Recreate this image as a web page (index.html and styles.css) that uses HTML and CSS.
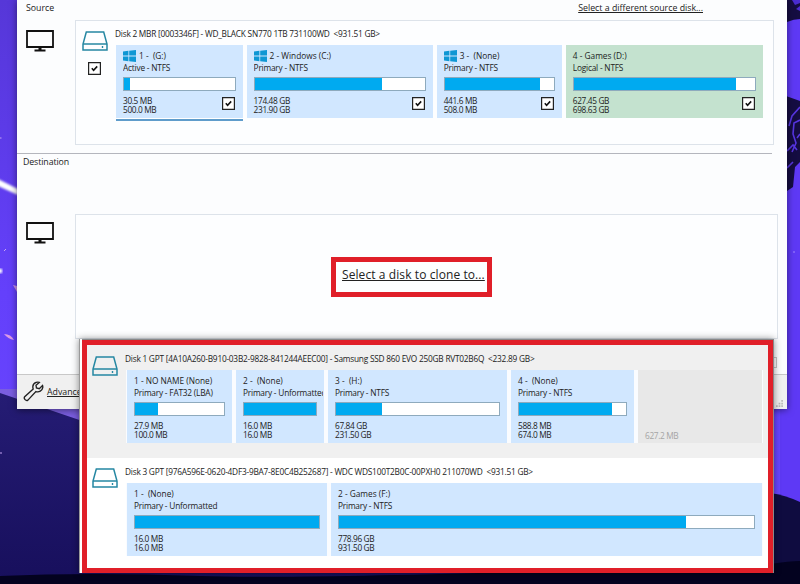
FILE: index.html
```
<!DOCTYPE html>
<html lang="en">
<head>
  <meta charset="UTF-8">
  <meta name="viewport" content="width=device-width, initial-scale=1.0">
  <title>Clone disk</title>
  <link rel="stylesheet" href="styles.css">
</head>
<body>
  <!-- shared icons -->
  <svg class="sprite" xmlns="http://www.w3.org/2000/svg">
    <symbol id="monitor" viewBox="0 0 28 22">
      <path d="M1 1h26v16H1z" fill="none" stroke="#111" stroke-width="1.800"/>
      <path d="M12.500 17h3v2.500h4v2h-11v-2h4z" fill="#111"/>
    </symbol>
    <symbol id="drive" viewBox="0 0 26 20">
      <path d="M4.300 1h17.400L25 13v6H1v-6z" fill="none" stroke="#2587a2" stroke-width="1.500"/>
      <path d="M1 13h24" fill="none" stroke="#2587a2" stroke-width="1.500"/>
      <path d="M20.500 15v2" stroke="#2587a2" stroke-width="1.400"/>
    </symbol>
    <symbol id="windows" viewBox="0 0 13 12">
      <path d="M0 1.600l5.400-.8v4.800H0zM6.200.7L13 0v5.600H6.200zM0 6.400h5.400v4.800L0 10.400zM6.200 6.400H13V12l-6.800-.8z" fill="#0f97d4"/>
    </symbol>
    <symbol id="check" viewBox="0 0 13 13">
      <path d="M.6.6h11.800v11.800H.6z" fill="#fff" stroke="#222" stroke-width="1.200"/>
      <path d="M3.800 6.200l1.800 2 3.600-3.800" fill="none" stroke="#111" stroke-width="1.600"/>
    </symbol>
  </svg>

  <svg class="wallpaper" viewBox="0 0 800 584" xmlns="http://www.w3.org/2000/svg">
    <defs>
      <linearGradient id="sky" x1="0" y1="0" x2="0" y2="1">
        <stop offset="0" stop-color="#5637d8"/>
        <stop offset=".5" stop-color="#6440fb"/>
        <stop offset="1" stop-color="#6a48ff"/>
      </linearGradient>
      <linearGradient id="ground" x1="0" y1="0" x2="0" y2="1">
        <stop offset="0" stop-color="#251c74"/>
        <stop offset="1" stop-color="#170f5c"/>
      </linearGradient>
      <filter id="soft"><feGaussianBlur stdDeviation="1"/></filter>
    </defs>
    <rect width="800" height="584" fill="url(#sky)"/>
    <rect x="780" width="20" height="584" fill="#5e39f5"/>
    <path d="M0 389h40l60 30v30H0z" fill="#7a5ee0"/>
    <path d="M0 393l100 34 500 60v97H0z" fill="url(#ground)"/>
    <path d="M770 493q15 2 30 9v82h-30z" fill="#0f0c40"/>
    <path d="M0 576q90-4 200 0t570-12q20-3 30-3v23H0z" fill="#03021f"/>
    <path d="M-2 179l20 10v6l-20-9z" fill="#fff" filter="url(#soft)"/>
    <circle cx="0" cy="271" r="2.400" fill="#fff" filter="url(#soft)"/>
    <path d="M4 334q7 0 10 6-6-1-10-6z" fill="#dd9be6"/>
    <path d="M13 285l4 7v-6z" fill="#cb93e8"/>
    <path d="M4 251l2-2M0 138h1.500M0 453h2" stroke="#c5a4f4"/>
    <path d="M786 0h14v19q-6 0-13 3z" fill="#150d42"/>
    <path d="M792 0h8v3l-5 2zM796 9l4-3v5z" fill="#4a2dd0"/>
    <path d="M786 96l14 5v61l-5 5-2 20-6 4z" fill="#150d42"/>
    <path d="M800 107l-8 9-3 10M800 120l-6 3-1 11 3 9-4 9M787 151l6-6 4 5M800 134l-3 4M787 168l6-6" fill="none" stroke="#5635e0" stroke-width="1.600"/>
    <path d="M793 252h2" stroke="#9f85ff"/>
  </svg>

  <main class="window">
    <section class="source">
      <header class="source-head">
        <span>Source</span>
        <a class="link">Select a different source disk...</a>
      </header>
      <div class="section-row">
        <svg class="monitor"><use href="#monitor"/></svg>
        <div class="panel source-panel">
          <div class="disk-side">
            <svg class="drive"><use href="#drive"/></svg>
            <svg class="check"><use href="#check"/></svg>
          </div>
          <div class="disk-main">
            <h2 class="disk-title">Disk 2 MBR [0003346F] - WD_BLACK SN770 1TB 731100WD  &lt;931.51 GB&gt;</h2>
            <div class="parts parts-source">
              <div class="part selected">
                <div class="name"><svg class="win"><use href="#windows"/></svg>1 -  (G:)</div>
                <div class="type">Active - NTFS</div>
                <div class="bar"><i style="width:5%"></i></div>
                <div class="sizes">30.5 MB<br>500.0 MB<svg class="check"><use href="#check"/></svg></div>
              </div>
              <div class="part">
                <div class="name"><svg class="win"><use href="#windows"/></svg>2 - Windows (C:)</div>
                <div class="type">Primary - NTFS</div>
                <div class="bar"><i style="width:75%"></i></div>
                <div class="sizes">174.48 GB<br>231.90 GB<svg class="check"><use href="#check"/></svg></div>
              </div>
              <div class="part">
                <div class="name"><svg class="win"><use href="#windows"/></svg>3 -  (None)</div>
                <div class="type">Primary - NTFS</div>
                <div class="bar"><i style="width:87%"></i></div>
                <div class="sizes">441.6 MB<br>508.0 MB<svg class="check"><use href="#check"/></svg></div>
              </div>
              <div class="part logical">
                <div class="name">4 - Games (D:)</div>
                <div class="type">Logical - NTFS</div>
                <div class="bar"><i style="width:89.5%"></i></div>
                <div class="sizes">627.45 GB<br>698.63 GB<svg class="check"><use href="#check"/></svg></div>
              </div>
            </div>
          </div>
        </div>
      </div>
    </section>

    <section class="destination">
      <header>Destination</header>
      <div class="section-row">
        <svg class="monitor"><use href="#monitor"/></svg>
        <div class="panel dest-panel">
          <a class="clone-to">Select a disk to clone to...</a>
        </div>
      </div>
    </section>

    <footer class="footer">
      <svg class="wrench" viewBox="0 0 20 20">
        <path d="M12.500 1.400c-2.900 1.100-3.500 3.900-2.800 6.200L1.600 15c-1.300 1.700 1.300 4.500 3.100 3.200l7.600-8.100c2.900.9 6-.7 6.500-3.700.1-.8 0-1.500-.2-2.100l-3.100 3-2.700-.7-.4-2.500 3.100-2.700c-1-.4-2-.4-3 0z" fill="none" stroke="#222" stroke-width="1.300"/>
      </svg>
      <a class="link advanced">Advanced Options</a>
      <svg class="grip" viewBox="0 0 8 8"><path d="M6 0h2v2H6zM3 3h2v2H3zM6 3h2v2H6zM0 6h2v2H0zM3 6h2v2H3zM6 6h2v2H6z" fill="#bbb"/></svg>
    </footer>
    <span class="stub"></span>
  </main>

  <!-- disk picker over the window -->
  <div class="picker">
    <div class="picker-list">
      <div class="picker-row hover">
        <svg class="drive"><use href="#drive"/></svg>
        <div class="disk-main">
          <h2 class="disk-title">Disk 1 GPT [4A10A260-B910-03B2-9828-841244AEEC00] - Samsung SSD 860 EVO 250GB RVT02B6Q  &lt;232.89 GB&gt;</h2>
          <div class="parts parts-disk1">
            <div class="part">
              <div class="name">1 - NO NAME (None)</div>
              <div class="type">Primary - FAT32 (LBA)</div>
              <div class="bar"><i style="width:26%"></i></div>
              <div class="sizes">27.9 MB<br>100.0 MB</div>
            </div>
            <div class="part">
              <div class="name">2 -  (None)</div>
              <div class="type">Primary - Unformatted</div>
              <div class="bar"><i style="width:100%"></i></div>
              <div class="sizes">16.0 MB<br>16.0 MB</div>
            </div>
            <div class="part">
              <div class="name">3 -  (H:)</div>
              <div class="type">Primary - NTFS</div>
              <div class="bar"><i style="width:28%"></i></div>
              <div class="sizes">67.84 GB<br>231.50 GB</div>
            </div>
            <div class="part">
              <div class="name">4 -  (None)</div>
              <div class="type">Primary - NTFS</div>
              <div class="bar"><i style="width:87%"></i></div>
              <div class="sizes">588.8 MB<br>674.0 MB</div>
            </div>
            <div class="part free">
              <div class="sizes">627.2 MB</div>
            </div>
          </div>
        </div>
      </div>
      <div class="picker-row">
        <svg class="drive"><use href="#drive"/></svg>
        <div class="disk-main">
          <h2 class="disk-title">Disk 3 GPT [976A596E-0620-4DF3-9BA7-8E0C4B252687] - WDC WDS100T2B0C-00PXH0 211070WD  &lt;931.51 GB&gt;</h2>
          <div class="parts parts-disk3">
            <div class="part">
              <div class="name">1 -  (None)</div>
              <div class="type">Primary - Unformatted</div>
              <div class="bar"><i style="width:100%"></i></div>
              <div class="sizes">16.0 MB<br>16.0 MB</div>
            </div>
            <div class="part">
              <div class="name">2 - Games (F:)</div>
              <div class="type">Primary - NTFS</div>
              <div class="bar"><i style="width:83.5%"></i></div>
              <div class="sizes">778.96 GB<br>931.50 GB</div>
            </div>
          </div>
        </div>
      </div>
    </div>
  </div>
</body>
</html>
```
FILE: styles.css
```
* {
  box-sizing: border-box;
}

body {
  margin: 0;
  width: 800px;
  height: 584px;
  overflow: hidden;
  position: relative;
  font-family: "Open Sans", "Noto Sans", sans-serif;
  font-size: 8.3px;
  line-height: 12px;
  color: #222;
}

svg {
  display: block;
  flex: none;
}

.sprite {
  position: absolute;
  width: 0;
  height: 0;
}

.wallpaper {
  position: absolute;
  inset: 0;
  width: 800px;
  height: 584px;
}

/* main window */
.window {
  position: relative;
  display: flex;
  flex-direction: column;
  width: 770px;
  height: 409px;
  margin-left: 17px;
  background: #fcfdfe;
  box-shadow: 0 1px 7px rgba(0, 0, 0, 0.5);
}

.source {
  height: 154px;
  margin-right: 15px;
  border-bottom: 1px solid #b4b6bd;
}

.source-head {
  display: flex;
  justify-content: space-between;
  height: 20px;
  padding: 2px 69px 0 9px;
  font-size: 8.8px;
}

.link {
  text-decoration: underline;
  text-underline-offset: 1px;
}

.section-row {
  display: flex;
}

.monitor {
  width: 28px;
  height: 22px;
  margin: 10px 21px 0 9px;
}

.panel {
  flex: none;
  border: 1px solid #dde3ea;
}

.source-panel {
  display: flex;
  width: 699px;
  height: 125px;
  padding: 0 9px 0 6px;
  background: #fdfeff;
}

.disk-side {
  width: 34px;
  padding-top: 10px;
}

.drive {
  width: 26px;
  height: 20px;
}

.check {
  width: 13px;
  height: 13px;
}

.disk-side .check {
  margin: 11px 0 0 6px;
}

.disk-main {
  flex: 1;
  min-width: 0;
}

.disk-title {
  margin: 0;
  font-size: 8.3px;
  font-weight: 400;
  line-height: 12px;
  letter-spacing: -0.23px;
  white-space: pre;
}

.source-panel .disk-title {
  padding-top: 7px;
  height: 24px;
  margin-left: -1px;
}

/* partitions */
.parts {
  display: grid;
  grid-template-rows: 73px;
  height: 73px;
}

.parts-source {
  grid-template-columns: 127px 186.5px 125.5px 197px;
  column-gap: 3.6px;
}

.part {
  display: flex;
  flex-direction: column;
  min-width: 0;
  padding: 5px 7px 0;
  background: #d1e7ff;
  white-space: pre;
}

.part.selected {
  height: 76px;
  border-bottom: 2px solid #5f9ccb;
  box-shadow: inset 0 -1px #fff;
}

.part.logical {
  background: #c4e2cf;
}

.name {
  display: flex;
  align-items: center;
  height: 12px;
}

.win {
  width: 13px;
  height: 12px;
  margin-right: 3px;
}

.type {
  height: 15px;
  margin: -0.5px -6px 0.5px 0;
  overflow: hidden;
  letter-spacing: -0.2px;
}

.bar {
  height: 14px;
  flex: none;
  background: #fff;
  border: 1px solid #8eaabd;
}

.bar i {
  display: block;
  height: 100%;
  background: #00aaf0;
}

.sizes {
  position: relative;
  margin-top: 6px;
  line-height: 8.5px;
  letter-spacing: -0.35px;
}

.sizes .check {
  position: absolute;
  right: 1px;
  top: 0;
}

/* destination */
.destination {
  height: 220px;
}

.destination header {
  height: 60px;
  padding: 2px 6px;
  font-size: 8.8px;
  letter-spacing: -0.1px;
}

.destination .monitor {
  margin-top: 8px;
}

.dest-panel {
  display: flex;
  justify-content: center;
  width: 703px;
  height: 125px;
  padding: 42px 30px 0 0;
  background: #fdfeff;
}

.clone-to {
  width: 161px;
  height: 40px;
  padding: 5px 0 0 6px;
  border: 5px solid #e01f29;
  font-size: 12px;
  line-height: 16px;
  letter-spacing: 0.09px;
  white-space: nowrap;
  text-decoration: underline;
  text-underline-offset: 1px;
}

/* footer */
.footer {
  display: flex;
  height: 35px;
  padding: 6px 4px 0 6px;
  background: #f0f0f0;
  border-top: 1px solid #c8c8c8;
}

.wrench {
  width: 21px;
  height: 21px;
}

.advanced {
  margin: 5px 0 0 3px;
  font-size: 8.8px;
}

.grip {
  width: 7px;
  height: 7px;
  margin: 19px 0 0 auto;
}

.stub {
  position: absolute;
  left: 750px;
  top: 357px;
  width: 10px;
  height: 11px;
  border: 1px solid #c5c5c5;
}

/* disk picker */
.picker {
  position: absolute;
  left: 79px;
  top: 339px;
  width: 695px;
  height: 234px;
  padding: 1px 1px 0 3px;
  background: linear-gradient(90deg, #999 1px, #fff 1px 3px, #888 3px);
  box-shadow: 0 0 7px rgba(0, 0, 0, 0.45);
}

.picker-list {
  height: 233px;
  border: 5px solid #e01f29;
  background: #fff;
}

.picker-row {
  display: flex;
  height: 112px;
  padding: 10px 5px 0;
}

.picker-row.hover {
  height: 113px;
  padding-top: 11px;
  background: #f0f0f0;
}

.picker-row .drive {
  margin-right: 9px;
}

.picker-row .disk-title {
  height: 17px;
  margin: -2px 0 0 -2px;
}

.hover .disk-title {
  margin-top: -3px;
}

.picker-row .parts {
  width: 637px;
  margin-left: -1px;
  padding: 0 1px;
  background: #fafcff;
}

.parts-disk1 {
  grid-template-columns: 105px 88px 179px 123px 124px;
  column-gap: 4px;
}

.parts-disk3 {
  grid-template-columns: 200px 431px;
  column-gap: 4px;
}

.part.free {
  background: #e8e8e8;
  color: #a5a5a5;
}

.free .sizes {
  margin-top: 57px;
}
```
